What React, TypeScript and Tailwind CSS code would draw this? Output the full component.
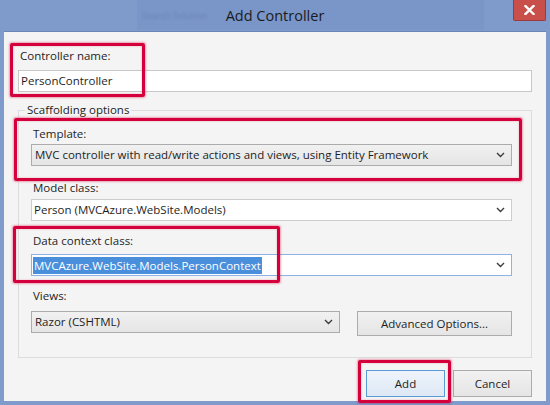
function Chevron() {
  return (
    <svg width="9" height="6" viewBox="0 0 9 6" className="shrink-0">
      <path d="M1 1 L4.5 4.5 L8 1" fill="none" stroke="#3c3c3c" strokeWidth="1.4" />
    </svg>
  );
}

function Label({ text, className = "" }: { text: string; className?: string }) {
  return <div className={`h-[16px] leading-[16px] text-[#1e1e1e] ${className}`}>{text}</div>;
}

function Callout({ className }: { className: string }) {
  return (
    <div
      className={`pointer-events-none absolute rounded-[2px] border-[3px] border-[#d4003c] shadow-[0_0_2px_1px_rgba(212,0,60,0.35),inset_0_0_2px_rgba(212,0,60,0.35)] ${className}`}
    />
  );
}

export default function App() {
  return (
    <div
      className="relative flex h-[405px] w-[550px] flex-col overflow-hidden bg-[#7f9bcc] text-[11.5px]"
      style={{ fontFamily: '"Open Sans", "Noto Sans", sans-serif' }}
    >
      {/* title bar, with the blurred search box of the window behind */}
      <div className="relative flex h-[31px] shrink-0 items-center justify-center">
        <div className="absolute left-[137px] top-0 h-[30px] w-[347px] bg-[#7893c6] opacity-70" />
        <span className="absolute left-[142px] top-[9px] text-[9px] text-[#6a84b6] blur-[1px]">
          Search Solution
        </span>
        <span className="relative text-[14.5px] text-[#1b1b1b]">Add Controller</span>
        <div className="absolute right-[4px] top-0 flex h-[21px] w-[33px] items-center justify-center rounded-b-[2px] border border-t-0 border-[#9b3b3b] bg-[#c9504a]">
          <svg width="11" height="10" viewBox="0 0 11 10">
            <path d="M1.5 1 L9.5 9 M9.5 1 L1.5 9" stroke="#ffffff" strokeWidth="2.4" strokeLinecap="square" />
          </svg>
        </div>
      </div>

      {/* client area */}
      <div className="mx-[4px] flex h-[370px] flex-col border-t border-[#6b86b6] bg-[#f4f4f4] px-[14px] pt-[16px]">
        <Label text="Controller name:" className="pl-[2px]" />
        <div className="mt-[6px] flex h-[22px] items-center border border-[#c8c8c8] bg-white pl-[2px] text-[#1e1e1e]">
          PersonController
        </div>

        {/* group box */}
        <div className="relative mt-[18px] border border-[#dcdcdc] pl-[12px] pr-[19px] pb-[21px] pt-[15px]">
          <span className="absolute -top-[9px] left-[6px] bg-[#f4f4f4] px-[2px] leading-[16px] text-[#1e1e1e]">
            Scaffolding options
          </span>

          <Label text="Template:" className="pl-[2px]" />
          <div className="mt-[2px] flex h-[22px] items-center justify-between border border-[#acacac] bg-gradient-to-b from-[#f1f1f1] to-[#e5e5e5] pl-[3px] pr-[6px] text-[#1e1e1e]">
            <span>MVC controller with read/write actions and views, using Entity Framework</span>
            <Chevron />
          </div>

          <Label text="Model class:" className="mt-[14px] pl-[2px]" />
          <div className="mt-[3px] flex h-[22px] items-center justify-between border border-[#cdcdcd] bg-white pl-[2px] pr-[6px] text-[#1e1e1e]">
            <span>Person (MVCAzure.WebSite.Models)</span>
            <Chevron />
          </div>

          <Label text="Data context class:" className="mt-[12px] pl-[2px]" />
          <div className="mt-[5px] flex h-[22px] items-center justify-between border border-[#8db2e3] bg-white pl-[1px] pr-[6px]">
            <span className="bg-[#4a8fdc] px-[1px] leading-[17px] text-white">MVCAzure.WebSite.Models.PersonContext</span>
            <Chevron />
          </div>

          <Label text="Views:" className="mt-[12px] pl-[2px]" />
          <div className="flex items-start gap-[17px]">
            <div className="mt-[7px] flex h-[22px] w-[309px] items-center justify-between border border-[#acacac] bg-gradient-to-b from-[#f1f1f1] to-[#e5e5e5] pl-[3px] pr-[6px] text-[#1e1e1e]">
              <span>Razor (CSHTML)</span>
              <Chevron />
            </div>
            <button className="mt-[7px] flex h-[25px] flex-1 items-center justify-center border border-[#acacac] bg-gradient-to-b from-[#f1f1f1] to-[#e5e5e5] text-[#1e1e1e]">
              Advanced Options...
            </button>
          </div>
        </div>

        {/* buttons */}
        <div className="mt-[12px] flex justify-end gap-[8px]">
          <button className="flex h-[27px] w-[79px] items-center justify-center border border-[#5b9bd5] bg-gradient-to-b from-[#eef4fb] to-[#dde8f5] text-[#1e1e1e]">
            Add
          </button>
          <button className="flex h-[27px] w-[79px] items-center justify-center border border-[#acacac] bg-gradient-to-b from-[#f1f1f1] to-[#e5e5e5] text-[#1e1e1e]">
            Cancel
          </button>
        </div>
      </div>

      {/* annotation callouts */}
      <Callout className="left-[10px] top-[43px] h-[54px] w-[135px]" />
      <Callout className="left-[14px] top-[118px] h-[63px] w-[508px]" />
      <Callout className="left-[13px] top-[226px] h-[57px] w-[267px]" />
      <Callout className="left-[358px] top-[360px] h-[43px] w-[93px]" />
    </div>
  );
}
